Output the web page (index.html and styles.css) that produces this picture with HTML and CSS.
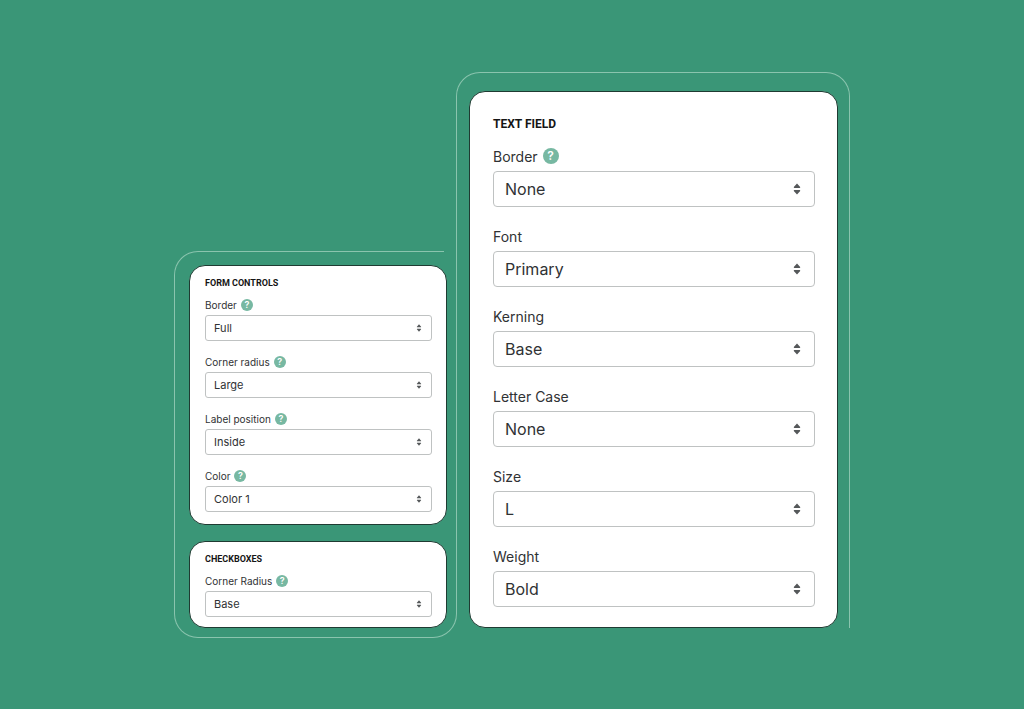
FILE: index.html
```html
<!DOCTYPE html>
<html lang="en">
<head>
    <meta charset="UTF-8">
    <meta name="viewport" content="width=device-width, initial-scale=1.0">
    <title>Form Controls</title>
    <link rel="stylesheet" href="styles.css">
</head>
<body>
    <!-- Arrow icon shared by all the selects -->
    <svg class="sprite" aria-hidden="true">
        <symbol id="arrows" viewBox="0 0 8 12">
            <path d="M4 0.5 L7.2 4.1 Q7.4 5 6.6 5 H1.4 Q0.6 5 0.8 4.1 Z M4 11.5 L7.2 7.9 Q7.4 7 6.6 7 H1.4 Q0.6 7 0.8 7.9 Z" fill="#55585a"/>
        </symbol>
    </svg>

    <main class="board">
        <div class="frame frame-left">
            <section class="card">
                <h2>FORM CONTROLS</h2>
                <div class="field">
                    <div class="label-row">
                        <label for="controlBorder">Border</label>
                        <button type="button" class="help" aria-label="Help">?</button>
                    </div>
                    <div class="select-box">
                        <select id="controlBorder">
                            <option>Full</option>
                            <option>None</option>
                        </select>
                        <svg class="arrows"><use href="#arrows"/></svg>
                    </div>
                </div>
                <div class="field">
                    <div class="label-row">
                        <label for="controlRadius">Corner radius</label>
                        <button type="button" class="help" aria-label="Help">?</button>
                    </div>
                    <div class="select-box">
                        <select id="controlRadius">
                            <option>Large</option>
                            <option>Base</option>
                        </select>
                        <svg class="arrows"><use href="#arrows"/></svg>
                    </div>
                </div>
                <div class="field">
                    <div class="label-row">
                        <label for="labelPosition">Label position</label>
                        <button type="button" class="help" aria-label="Help">?</button>
                    </div>
                    <div class="select-box">
                        <select id="labelPosition">
                            <option>Inside</option>
                            <option>Outside</option>
                        </select>
                        <svg class="arrows"><use href="#arrows"/></svg>
                    </div>
                </div>
                <div class="field">
                    <div class="label-row">
                        <label for="controlColor">Color</label>
                        <button type="button" class="help" aria-label="Help">?</button>
                    </div>
                    <div class="select-box">
                        <select id="controlColor">
                            <option>Color 1</option>
                            <option>Color 2</option>
                        </select>
                        <svg class="arrows"><use href="#arrows"/></svg>
                    </div>
                </div>
            </section>

            <section class="card card-short">
                <h2>CHECKBOXES</h2>
                <div class="field">
                    <div class="label-row">
                        <label for="checkboxRadius">Corner Radius</label>
                        <button type="button" class="help" aria-label="Help">?</button>
                    </div>
                    <div class="select-box">
                        <select id="checkboxRadius">
                            <option>Base</option>
                            <option>Large</option>
                        </select>
                        <svg class="arrows"><use href="#arrows"/></svg>
                    </div>
                </div>
            </section>
        </div>

        <div class="frame frame-right">
            <section class="card card-large">
                <h2>TEXT FIELD</h2>
                <div class="field">
                    <div class="label-row">
                        <label for="textBorder">Border</label>
                        <button type="button" class="help" aria-label="Help">?</button>
                    </div>
                    <div class="select-box">
                        <select id="textBorder">
                            <option>None</option>
                            <option>Full</option>
                        </select>
                        <svg class="arrows"><use href="#arrows"/></svg>
                    </div>
                </div>
                <div class="field">
                    <div class="label-row">
                        <label for="textFont">Font</label>
                    </div>
                    <div class="select-box">
                        <select id="textFont">
                            <option>Primary</option>
                            <option>Secondary</option>
                        </select>
                        <svg class="arrows"><use href="#arrows"/></svg>
                    </div>
                </div>
                <div class="field">
                    <div class="label-row">
                        <label for="textKerning">Kerning</label>
                    </div>
                    <div class="select-box">
                        <select id="textKerning">
                            <option>Base</option>
                            <option>Large</option>
                        </select>
                        <svg class="arrows"><use href="#arrows"/></svg>
                    </div>
                </div>
                <div class="field">
                    <div class="label-row">
                        <label for="textCase">Letter Case</label>
                    </div>
                    <div class="select-box">
                        <select id="textCase">
                            <option>None</option>
                            <option>Uppercase</option>
                        </select>
                        <svg class="arrows"><use href="#arrows"/></svg>
                    </div>
                </div>
                <div class="field">
                    <div class="label-row">
                        <label for="textSize">Size</label>
                    </div>
                    <div class="select-box">
                        <select id="textSize">
                            <option>L</option>
                            <option>M</option>
                        </select>
                        <svg class="arrows"><use href="#arrows"/></svg>
                    </div>
                </div>
                <div class="field">
                    <div class="label-row">
                        <label for="textWeight">Weight</label>
                    </div>
                    <div class="select-box">
                        <select id="textWeight">
                            <option>Bold</option>
                            <option>Regular</option>
                        </select>
                        <svg class="arrows"><use href="#arrows"/></svg>
                    </div>
                </div>
            </section>
        </div>
    </main>
</body>
</html>
```
FILE: styles.css
```css
* {
    box-sizing: border-box;
}
body {
    margin: 0;
    min-height: 100vh;
    display: flex;
    align-items: center;
    justify-content: center;
    background-color: #3a9677;
    color: #303234;
    font-family: Inter, "Liberation Sans", sans-serif;
}
.sprite {
    position: absolute;
    width: 0;
    height: 0;
}
.board {
    display: grid;
    grid-template-columns: 282fr 394fr;
    align-items: end;
    width: 100%;
    max-width: 676px;
}

/* Thin outlines around each group of cards */
.frame {
    position: relative;
}
.frame::before,
.frame::after {
    content: "";
    position: absolute;
    border: 0 solid #8ac4ae;
    pointer-events: none;
}
.frame-left {
    display: flex;
    flex-direction: column;
    gap: 16px;
    padding: 14px 9px 10px 15px;
}
.frame-left::before {
    inset: 0 12px 50% 0;
    border-width: 1px 0 0 1px;
    border-top-left-radius: 24px;
}
.frame-left::after {
    inset: 50% -1px 0 0;
    border-width: 0 1px 1px 1px;
    border-radius: 0 0 24px 24px;
}
.frame-right {
    margin-bottom: 10px;
    padding: 19px 12px 0 13px;
}
.frame-right::before {
    inset: 0 50% 80px 0;
    border-width: 1px 0 0 1px;
    border-top-left-radius: 24px;
}
.frame-right::after {
    inset: 0 0 0 50%;
    border-width: 1px 1px 0 0;
    border-top-right-radius: 24px;
}

.card {
    padding: 10px 14px 12px 15px;
    background-color: #fff;
    border: 1px solid #1f3b32;
    border-radius: 16px;
}
.card-short {
    padding-bottom: 10px;
}
h2 {
    margin: 0 0 7px;
    font-family: Roboto, "Liberation Sans", sans-serif;
    font-size: 9px;
    line-height: 14px;
    font-weight: 700;
    color: #151515;
}
.field + .field {
    margin-top: 13px;
}
.label-row {
    display: flex;
    align-items: center;
    gap: 4px;
    height: 18px;
    padding-bottom: 2px;
    font-size: 10px;
}
.help {
    width: 12px;
    height: 12px;
    padding: 0;
    border: none;
    border-radius: 50%;
    background-color: #77b8a2;
    color: #fff;
    font-family: inherit;
    font-size: 9px;
    line-height: 12px;
    font-weight: 600;
    text-align: center;
    cursor: pointer;
}
.select-box {
    position: relative;
}
select {
    display: block;
    appearance: none;
    width: 100%;
    height: 26px;
    padding: 0 24px 0 8px;
    border: 1px solid #bfc2c2;
    border-radius: 3px;
    background-color: #fff;
    color: inherit;
    font-family: inherit;
    font-size: 11px;
}
.arrows {
    position: absolute;
    top: 0;
    bottom: 0;
    right: 10px;
    margin: auto 0;
    width: 6px;
    height: 8px;
    pointer-events: none;
}

.card-large {
    padding: 23px 22px 20px 23px;
}
.card-large h2 {
    margin-bottom: 13px;
    font-size: 12px;
    line-height: 18px;
}
.card-large .field + .field {
    margin-top: 19px;
}
.card-large .label-row {
    gap: 5px;
    height: 25px;
    padding-bottom: 4px;
    font-size: 14px;
}
.card-large .help {
    width: 16px;
    height: 16px;
    font-size: 12px;
    line-height: 16px;
}
.card-large select {
    height: 36px;
    padding: 0 32px 0 11px;
    border-radius: 4px;
    font-size: 16px;
}
.card-large .arrows {
    right: 14px;
    width: 8px;
    height: 12px;
}
```
